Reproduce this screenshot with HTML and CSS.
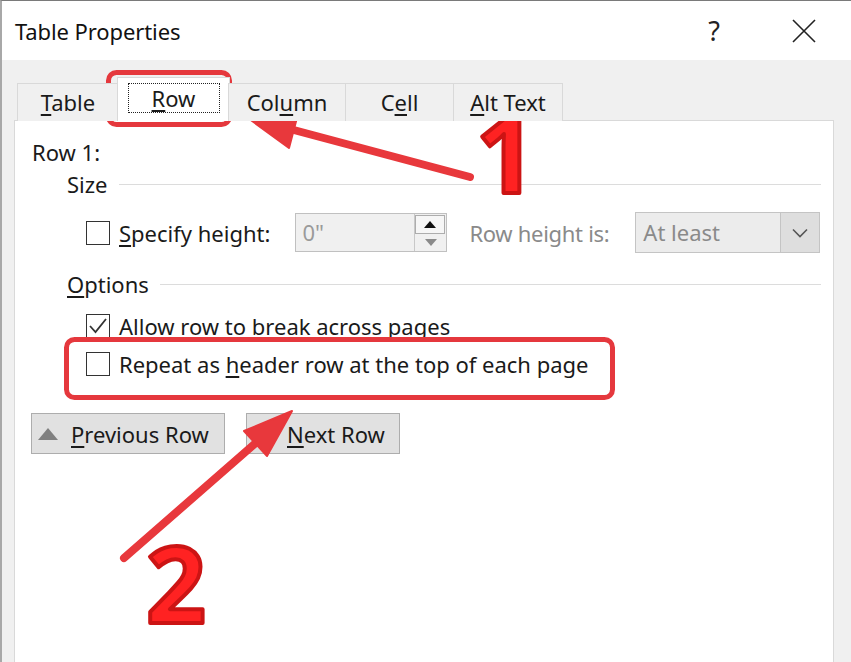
FILE: index.html
```html
<!DOCTYPE html>
<html>
<head>
<meta charset="utf-8">
<link rel="stylesheet" href="styles.css">
</head>
<body>
<div class="dialog">
  <div class="titlebar">
    <span class="title">Table Properties</span>
    <span class="help">?</span>
    <svg class="close" width="24" height="24" viewBox="0 0 24 24"><path d="M1 1 L23 23 M23 1 L1 23" stroke="#222" stroke-width="1.6" fill="none"/></svg>
  </div>
  <div class="content">
    <div class="tabs">
      <div class="tab tab-table"><span><u>T</u>able</span></div>
      <div class="tab tab-row selected"><span class="focus"><u>R</u>ow</span></div>
      <div class="tab tab-column"><span>Col<u>u</u>mn</span></div>
      <div class="tab tab-cell"><span>C<u>e</u>ll</span></div>
      <div class="tab tab-alt"><span><u>A</u>lt Text</span></div>
    </div>
    <div class="panel">
      <div class="row-label">Row 1:</div>
      <div class="group-head"><span>Size</span><span class="rule"></span></div>
      <div class="size-row">
        <span class="checkbox"></span>
        <span class="label specify"><u>S</u>pecify height:</span>
        <div class="spin">
          <span class="spin-value">0"</span>
          <div class="spin-buttons">
            <span class="spin-up"><svg width="12" height="7" viewBox="0 0 12 7"><path d="M0 7 L6 0 L12 7 Z" fill="#111"/></svg></span>
            <span class="spin-down"><svg width="12" height="7" viewBox="0 0 12 7"><path d="M0 0 L6 7 L12 0 Z" fill="#8a8a8a"/></svg></span>
          </div>
        </div>
        <span class="label disabled rh">Row height is:</span>
        <div class="select">
          <span class="select-value">At least</span>
          <span class="select-arrow"><svg width="16" height="10" viewBox="0 0 16 10"><path d="M1 1.5 L8 8.5 L15 1.5" stroke="#555" stroke-width="1.6" fill="none"/></svg></span>
        </div>
      </div>
      <div class="group-head options"><span><u>O</u>ptions</span><span class="rule"></span></div>
      <div class="check-row first">
        <span class="checkbox"><svg width="24" height="24" viewBox="0 0 24 24"><path d="M4 12 L9.5 18 L20 5" stroke="#333" stroke-width="1.8" fill="none"/></svg></span>
        <span class="label">Allow row to break across pages</span>
      </div>
      <div class="check-row second">
        <span class="checkbox"></span>
        <span class="label">Repeat as <u>h</u>eader row at the top of each page</span>
      </div>
      <div class="buttons">
        <div class="btn btn-prev"><svg width="20" height="12" viewBox="0 0 20 12"><path d="M0 12 L10 0 L20 12 Z" fill="#808080"/></svg><span><u>P</u>revious Row</span></div>
        <div class="btn btn-next"><svg width="20" height="12" viewBox="0 0 20 12"><path d="M0 0 L10 12 L20 0 Z" fill="#808080"/></svg><span><u>N</u>ext Row</span></div>
      </div>
    </div>
  </div>
  <svg class="annot" width="851" height="662" viewBox="0 0 851 662">
    <g fill="none" stroke="#e5383d" stroke-width="5">
      <rect x="108.5" y="72.5" width="121" height="52" rx="8"/>
      <rect x="66.5" y="339.5" width="546" height="58" rx="8"/>
    </g>
    <g stroke="#e8383c" stroke-width="8" stroke-linecap="round" fill="#e8383c">
      <line x1="470" y1="177" x2="290" y2="129"/>
      <polygon points="248,118 299,110 289,148" stroke-width="2" stroke-linejoin="round"/>
      <line x1="124" y1="558" x2="258" y2="441"/>
      <polygon points="292,411 267,456 244,431" stroke-width="2" stroke-linejoin="round"/>
    </g>
    <g class="num">
      <text x="476" y="193">1</text>
      <text x="146" y="623">2</text>
    </g>
  </svg>
</div>
</body>
</html>
```
FILE: styles.css
```css
html, body {
  margin: 0;
  padding: 0;
}
body {
  width: 851px;
  height: 662px;
  overflow: hidden;
  background: #f0f0f0;
  font-family: "Noto Sans", "Open Sans", sans-serif;
  color: #1a1a1a;
}
u {
  text-decoration-thickness: 1.5px;
  text-underline-offset: 3px;
}
.dialog {
  position: relative;
  width: 851px;
  height: 662px;
  box-sizing: border-box;
  border-left: 2px solid #a8a8a8;
  border-top: 1px solid #7a7a7a;
  overflow: hidden;
}
.titlebar {
  height: 59px;
  background: #fff;
  display: flex;
  align-items: center;
  padding-left: 13px;
}
.title {
  font-size: 22px;
  letter-spacing: -0.1px;
  color: #111;
}
.help {
  margin-left: auto;
  font-size: 27px;
  color: #222;
}
.close {
  margin-left: 72px;
  margin-right: 35px;
}
.content {
  padding: 20px 17px 0 12px;
}
.tabs {
  display: flex;
  align-items: flex-end;
  height: 41px;
  margin-left: 3px;
  position: relative;
  z-index: 1;
  margin-bottom: -1px;
}
.tab {
  box-sizing: border-box;
  height: 38px;
  border: 1px solid #d9d9d9;
  border-bottom: none;
  background: #f0f0f0;
  display: flex;
  align-items: center;
  justify-content: center;
  font-size: 22px;
  padding-bottom: 2px;
  margin-left: -1px;
}
.tab-table { width: 102px; margin-left: 0; }
.tab-column { width: 118px; }
.tab-cell { width: 109px; }
.tab-alt { width: 110px; }
.tab.selected {
  height: 44px;
  background: #fff;
  margin-left: -2px;
  margin-right: -1px;
  width: 113px;
  padding-bottom: 3px;
}
.focus {
  display: inline-block;
  box-sizing: border-box;
  width: 92px;
  height: 30px;
  line-height: 28px;
  text-align: center;
  border: 1px dotted #222;
}
.panel {
  background: #fff;
  border: 1px solid #d9d9d9;
  height: 560px;
  padding: 19px 0 0 16px;
  box-sizing: border-box;
}
.row-label {
  font-size: 22px;
  line-height: 24px;
  margin-left: 1px;
}
.group-head {
  display: flex;
  align-items: center;
  margin-left: 36px;
  margin-top: 8px;
  font-size: 22px;
  line-height: 24px;
  margin-right: 12px;
}
.group-head .rule {
  flex: 1;
  height: 1px;
  background: #dcdcdc;
  margin-left: 11px;
}
.group-head.options {
  margin-top: 19px;
}
.size-row {
  display: flex;
  align-items: center;
  height: 41px;
  margin-top: 16px;
  margin-left: 55px;
}
.checkbox {
  box-sizing: border-box;
  width: 24px;
  height: 24px;
  border: 1.5px solid #333;
  background: #fff;
  display: inline-block;
  flex: none;
  position: relative;
}
.checkbox svg {
  position: absolute;
  left: -1.5px;
  top: -1.5px;
}
.label {
  font-size: 22px;
  line-height: 24px;
  margin-left: 9px;
  white-space: nowrap;
}
.label.specify {
  margin-right: 25px;
}
.label.disabled {
  color: #8a8a8a;
}
.label.rh {
  margin-left: 22px;
  margin-right: 26px;
  letter-spacing: -0.3px;
}
.spin {
  box-sizing: border-box;
  width: 152px;
  height: 39px;
  border: 1px solid #c0c0c0;
  background: #f0f0f0;
  display: flex;
}
.spin-value {
  flex: 1;
  font-size: 22px;
  line-height: 37px;
  padding-left: 6px;
  color: #9a9a9a;
}
.spin-buttons {
  width: 31px;
  display: flex;
  flex-direction: column;
  border-left: 1px solid #c8c8c8;
}
.spin-up, .spin-down {
  flex: 1;
  display: flex;
  align-items: center;
  justify-content: center;
}
.spin-up {
  border: 1px solid #adadad;
  background: #f6f6f6;
  margin: 1px 1px 0 0;
}
.select {
  box-sizing: border-box;
  width: 185px;
  height: 41px;
  border: 1px solid #c4c4c4;
  background: #ececec;
  display: flex;
}
.select-value {
  flex: 1;
  font-size: 22px;
  line-height: 39px;
  padding-left: 7px;
  color: #8a8a8a;
}
.select-arrow {
  width: 38px;
  border-left: 1px solid #c4c4c4;
  background: #dedede;
  display: flex;
  align-items: center;
  justify-content: center;
}
.check-row {
  display: flex;
  align-items: center;
  height: 24px;
  margin-left: 55px;
}
.check-row.first { margin-top: 18px; }
.check-row.second { margin-top: 14px; }
.buttons {
  display: flex;
  gap: 21px;
  margin-top: 37px;
}
.btn {
  box-sizing: border-box;
  height: 41px;
  border: 1px solid #adadad;
  background: #e1e1e1;
  display: flex;
  align-items: center;
  font-size: 22px;
  padding-left: 6px;
}
.btn svg {
  margin-right: 13px;
}
.btn-prev { width: 194px; }
.btn-next { width: 154px; }
.btn-next svg { margin-right: 14px; }
.annot {
  position: absolute;
  left: -2px;
  top: -1px;
  pointer-events: none;
}
.num text {
  font-family: "Noto Sans", "Open Sans", sans-serif;
  font-weight: 700;
  font-style: normal;
  font-size: 105px;
  fill: #ff2222;
  stroke: #cc1414;
  stroke-width: 4px;
  stroke-linejoin: round;
}
```
